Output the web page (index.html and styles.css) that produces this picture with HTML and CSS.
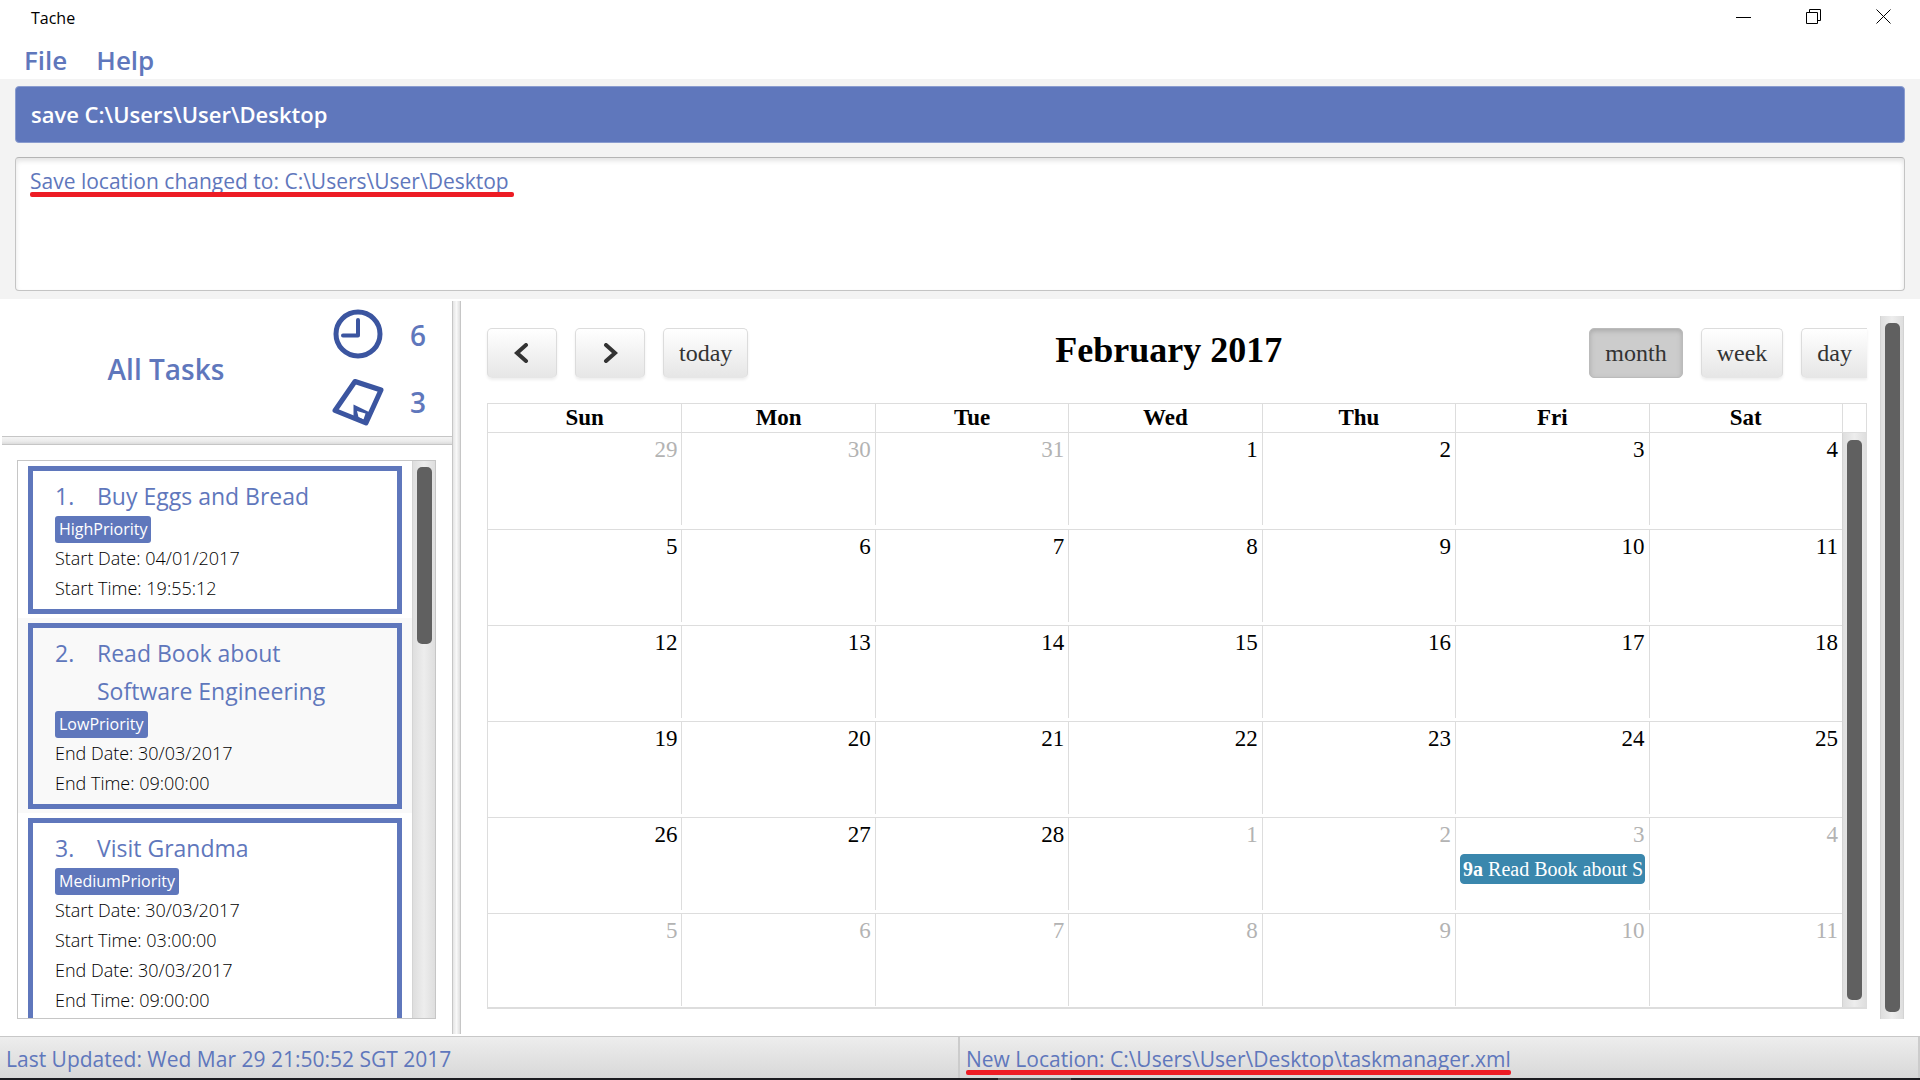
FILE: index.html
```
<!DOCTYPE html>
<html lang="en">
<head>
<meta charset="utf-8">
<title>Tache</title>
<meta name="viewport" content="width=device-width, initial-scale=1">
<link rel="stylesheet" href="styles.css">
</head>
<body>
<header class="titlebar">
  <span class="app-name">Tache</span>
  <div class="window-controls">
    <button type="button" aria-label="Minimize"><svg width="16" height="16" viewBox="0 0 16 16"><path d="M0 8.500H15"/></svg></button>
    <button type="button" aria-label="Restore"><svg width="16" height="16" viewBox="0 0 16 16"><path d="M.5 3.500H11.500V14.500H.5ZM3.500 3.500V.5H14.500V11.500H11.500"/></svg></button>
    <button type="button" aria-label="Close"><svg width="16" height="16" viewBox="0 0 16 16"><path d="M.5.5 14.500 14.500M14.500.5.5 14.500"/></svg></button>
  </div>
</header>
<nav class="menubar">
  <button type="button">File</button>
  <button type="button">Help</button>
</nav>
<section class="console">
  <input class="command" type="text" aria-label="Command" value="save C:\Users\User\Desktop">
  <div class="result-wrap">
    <textarea class="result" aria-label="Result" readonly>Save location changed to: C:\Users\User\Desktop</textarea>
    <span class="mark mark-result"></span>
  </div>
</section>
<main class="split">
  <aside class="sidebar">
    <div class="summary">
      <h1>All Tasks</h1>
      <div class="counts">
        <svg width="54" height="54" viewBox="0 0 54 54"><circle cx="26" cy="26" r="22"/><path d="M26 12V27.500H11" class="round"/></svg>
        <span>6</span>
        <svg width="54" height="54" viewBox="0 0 54 54"><path d="M23 6.500 49 15 34 48 3 35.500Z"/><path class="fold" d="M21.500 29.500 38 37.500 34 48 21.500 43ZM25 36 26.500 42 31.500 44.500 33.500 38.500Z"/></svg>
        <span>3</span>
      </div>
    </div>
    <div class="divider-h"></div>
    <div class="list-area">
      <div class="list">
        <ol class="tasks">
          <li><article class="card">
            <h2><span>1.</span><span>Buy Eggs and Bread</span></h2>
            <span class="tag">HighPriority</span>
            <p>Start Date: 04/01/2017</p>
            <p>Start Time: 19:55:12</p>
          </article></li>
          <li><article class="card">
            <h2><span>2.</span><span>Read Book about Software Engineering</span></h2>
            <span class="tag">LowPriority</span>
            <p>End Date: 30/03/2017</p>
            <p>End Time: 09:00:00</p>
          </article></li>
          <li><article class="card">
            <h2><span>3.</span><span>Visit Grandma</span></h2>
            <span class="tag">MediumPriority</span>
            <p>Start Date: 30/03/2017</p>
            <p>Start Time: 03:00:00</p>
            <p>End Date: 30/03/2017</p>
            <p>End Time: 09:00:00</p>
          </article></li>
        </ol>
        <div class="scrollbar"><div class="thumb thumb-list"></div></div>
      </div>
    </div>
  </aside>
  <div class="divider-v"></div>
  <section class="browser">
    <div class="calendar">
      <div class="toolbar">
        <div class="group">
          <button type="button" class="btn arrow" aria-label="Previous"><svg width="16" height="20" viewBox="0 0 16 20"><path d="M12 2 3 10 12 18"/></svg></button>
          <button type="button" class="btn arrow" aria-label="Next"><svg width="16" height="20" viewBox="0 0 16 20"><path d="M4 2 13 10 4 18"/></svg></button>
          <button type="button" class="btn">today</button>
        </div>
        <h2>February 2017</h2>
        <div class="group">
          <button type="button" class="btn active">month</button>
          <button type="button" class="btn">week</button>
          <button type="button" class="btn last">day</button>
        </div>
      </div>
      <table class="month">
        <colgroup><col span="7"><col class="gutter"></colgroup>
        <thead><tr><th>Sun</th><th>Mon</th><th>Tue</th><th>Wed</th><th>Thu</th><th>Fri</th><th>Sat</th><th></th></tr></thead>
        <tbody>
          <tr><td class="other"><div>29</div></td><td class="other"><div>30</div></td><td class="other"><div>31</div></td><td><div>1</div></td><td><div>2</div></td><td><div>3</div></td><td><div>4</div></td><td class="scroll-cell" rowspan="6"><div class="scrollbar"><div class="thumb"></div></div></td></tr>
          <tr><td><div>5</div></td><td><div>6</div></td><td><div>7</div></td><td><div>8</div></td><td><div>9</div></td><td><div>10</div></td><td><div>11</div></td></tr>
          <tr><td><div>12</div></td><td><div>13</div></td><td><div>14</div></td><td><div>15</div></td><td><div>16</div></td><td><div>17</div></td><td><div>18</div></td></tr>
          <tr><td><div>19</div></td><td><div>20</div></td><td><div>21</div></td><td><div>22</div></td><td><div>23</div></td><td><div>24</div></td><td><div>25</div></td></tr>
          <tr><td><div>26</div></td><td><div>27</div></td><td><div>28</div></td><td class="other"><div>1</div></td><td class="other"><div>2</div></td><td class="other"><div>3<a class="event" href="#"><b>9a</b> Read Book about S</a></div></td><td class="other"><div>4</div></td></tr>
          <tr><td class="other"><div>5</div></td><td class="other"><div>6</div></td><td class="other"><div>7</div></td><td class="other"><div>8</div></td><td class="other"><div>9</div></td><td class="other"><div>10</div></td><td class="other"><div>11</div></td></tr>
        </tbody>
      </table>
    </div>
    <div class="scrollbar outer"><div class="thumb"></div></div>
  </section>
</main>
<footer class="statusbar">
  <div>Last Updated: Wed Mar 29 21:50:52 SGT 2017</div>
  <div><span class="location">New Location: C:\Users\User\Desktop\taskmanager.xml<span class="mark"></span></span></div>
</footer>
<div class="desktop-edge"><span></span></div>
</body>
</html>
```
FILE: styles.css
```
* { box-sizing: border-box; }

:root {
  --blue: #5f77bc;
  --ui: "Open Sans", "Noto Sans", sans-serif;
  --serif: "Liberation Serif", "Times New Roman", serif;
}

body {
  margin: 0;
  height: 100vh;
  display: flex;
  flex-direction: column;
  overflow: hidden;
  background: #fff;
  color: var(--blue);
  font-family: var(--ui);
}

button { font: inherit; color: inherit; background: none; border: 0; padding: 0; }
h1, h2, p { margin: 0; }

.titlebar {
  display: flex;
  justify-content: space-between;
  height: 36px;
  padding: 0 1px 0 31px;
  color: #000;
  font-size: 16px;
  line-height: 36px;
}
.window-controls { display: flex; }
.window-controls button {
  width: 70px;
  height: 34px;
  display: flex;
  align-items: center;
  justify-content: center;
}
.window-controls svg { fill: none; stroke: #000; }

.menubar {
  display: flex;
  gap: 29px;
  height: 43px;
  padding: 5px 24px 0;
  font-size: 26px;
  font-weight: 600;
  line-height: 38px;
}

.console {
  height: 220px;
  padding: 7px 15px 8px;
  display: flex;
  flex-direction: column;
  gap: 14px;
  background: #f3f3f3;
}
.command {
  width: 100%;
  height: 57px;
  padding: 0 15px 2px;
  border: 1px solid #8a9ccf;
  border-radius: 4px;
  background: var(--blue);
  color: #fff;
  font: 600 22px/32px var(--ui);
}
.result-wrap { position: relative; flex: 1; }
.result {
  display: block;
  width: 100%;
  height: 100%;
  padding: 7px 14px;
  border: 1px solid #c4c4c4;
  border-top-color: #b4b4b4;
  border-radius: 4px;
  background: #fff;
  box-shadow: inset 0 3px 5px #e4e4e4;
  color: var(--blue);
  font: 21px/32px var(--ui);
  resize: none;
}
.mark {
  position: absolute;
  height: 5px;
  border-radius: 2px;
  background: #ed1c24;
}
.mark-result { left: 15px; top: 35px; width: 484px; }

.split { flex: 1; min-height: 0; display: flex; padding: 2px 0; }
.sidebar { width: 452px; display: flex; flex-direction: column; }
.divider-v {
  width: 9px;
  border: solid #c6c6c6;
  border-width: 0 1px;
  background: linear-gradient(90deg, #e4e4e4, #f8f8f8 50%, #dedede);
}
.divider-h {
  height: 9px;
  margin-left: 2px;
  border: solid #c6c6c6;
  border-width: 1px 0;
  background: linear-gradient(#f4f4f4, #ececec 60%, #dcdcdc);
}
.summary { height: 135px; display: flex; align-items: center; }
.summary h1 { width: 332px; text-align: center; font-size: 28px; font-weight: 600; line-height: 38px; }
.counts {
  display: grid;
  grid-template-columns: 54px 24px;
  grid-auto-rows: 67px;
  column-gap: 24px;
  align-items: center;
  font-size: 28px;
  font-weight: 600;
}
.counts svg { fill: none; stroke: #3b55a0; stroke-width: 5; stroke-linejoin: round; }
.counts .round { stroke-linecap: round; stroke-width: 4; }
.counts .fold { fill: #3b55a0; stroke: none; fill-rule: evenodd; }

.list-area { flex: 1; min-height: 0; padding: 15px 16px 15px 17px; }
.list { height: 100%; display: flex; border: 1px solid #c6c6c6; }
.tasks { flex: 1; margin: 0; padding: 0; overflow: hidden; list-style: none; }
.tasks li { padding: 5px 10px 4px; }
.tasks li:nth-child(even) { background: #f9f9f9; }
.card { padding: 6px 22px; border: 5px solid var(--blue); }
.card h2 { display: flex; font-size: 23px; font-weight: 400; line-height: 38px; }
.card h2 span:first-child { flex: 0 0 42px; }
.tag {
  display: block;
  width: fit-content;
  margin-top: 1px;
  padding: 0 4px;
  border-radius: 3px;
  background: var(--blue);
  color: #fff;
  font-size: 16px;
  line-height: 27px;
}
.card p { color: #000; font-size: 18px; font-weight: 300; line-height: 30px; }

.scrollbar {
  width: 24px;
  padding: 7px 4px;
  border: solid #d4d4d4;
  border-width: 0 1px;
  background: linear-gradient(90deg, #dedede, #ededed 50%, #dedede);
}
.thumb { width: 15px; height: 100%; border-radius: 5px; background: #606060; }
.thumb-list { height: 177px; }
.list .scrollbar { width: 23px; padding: 6px 4px; border-right: 0; }

.browser { flex: 1; display: flex; gap: 13px; padding: 15px 16px 15px 26px; }
.calendar {
  flex: 1;
  display: flex;
  flex-direction: column;
  padding: 12px 0 11px;
  color: #000;
  font-family: var(--serif);
}
.toolbar { display: flex; justify-content: space-between; margin-bottom: 25px; }
.toolbar h2 { font-size: 36px; line-height: 44px; }
.group { display: flex; gap: 18px; }
.btn {
  height: 50px;
  padding: 0 15px;
  border: 1px solid #dcdcdc;
  border-bottom-color: #e6e6e6;
  border-radius: 5px;
  background: linear-gradient(#fff, #e6e6e6);
  box-shadow: 0 2px 3px #eee;
  color: #333;
  font-size: 24px;
}
.arrow { width: 70px; }
.arrow svg { display: block; margin: 0 auto; fill: none; stroke: #333; stroke-width: 4; stroke-linecap: round; }
.btn.active { border-color: #bbb; background: #ccc; box-shadow: inset 0 2px 5px #aaa; }
.btn.last { border-right: 0; border-radius: 5px 0 0 5px; }

.month {
  width: 100%;
  table-layout: fixed;
  border-collapse: separate;
  border-spacing: 0;
  border: 1px solid #ddd;
  border-bottom-width: 2px;
  font-size: 23px;
  line-height: 28px;
}
.gutter { width: 24px; }
.month th { height: 29px; padding: 0; border-bottom: 1px solid #ddd; border-left: 1px solid #ddd; }
.month th:first-child { border-left: 0; }
.month td { height: 96px; padding: 0; border-bottom: 1px solid #ddd; vertical-align: top; }
.month tbody tr:first-child td { height: 97px; }
.month tbody tr:last-child td { height: 93px; border-bottom: 0; }
.month td > div:not(.scrollbar) {
  height: 92px;
  padding: 3px 4px;
  border-left: 1px solid #ddd;
  text-align: right;
}
.month td:first-child > div:not(.scrollbar) { border-left: 0; }
.month .other { color: #b3b3b3; }
.month tbody .scroll-cell { height: 1px; border: 0; }
.scroll-cell .scrollbar { height: 574px; border-right: 0; }
.event {
  display: block;
  height: 30px;
  margin-top: 5px;
  padding: 0 2px;
  overflow: hidden;
  border: 1px solid #3a87ad;
  border-radius: 4px;
  background: #3a87ad;
  color: #fff;
  font-size: 20px;
  line-height: 28px;
  text-align: left;
  text-decoration: none;
  white-space: nowrap;
}

.statusbar {
  display: grid;
  grid-template-columns: 1fr 1fr;
  height: 42px;
  border-top: 1px solid #c8c8c8;
  background: linear-gradient(#ededed, #d8d8d8);
  font-size: 21px;
  line-height: 45px;
}
.statusbar > div { height: 41px; padding-left: 6px; border-right: 2px solid #ccc; white-space: nowrap; }
.location { position: relative; display: inline-block; }
.location .mark { left: 0; right: 0; top: 33px; }
.desktop-edge { height: 2px; padding-left: 52%; background: #1c1c20; }
.desktop-edge span { display: block; width: 73px; height: 2px; background: #555; }
```
